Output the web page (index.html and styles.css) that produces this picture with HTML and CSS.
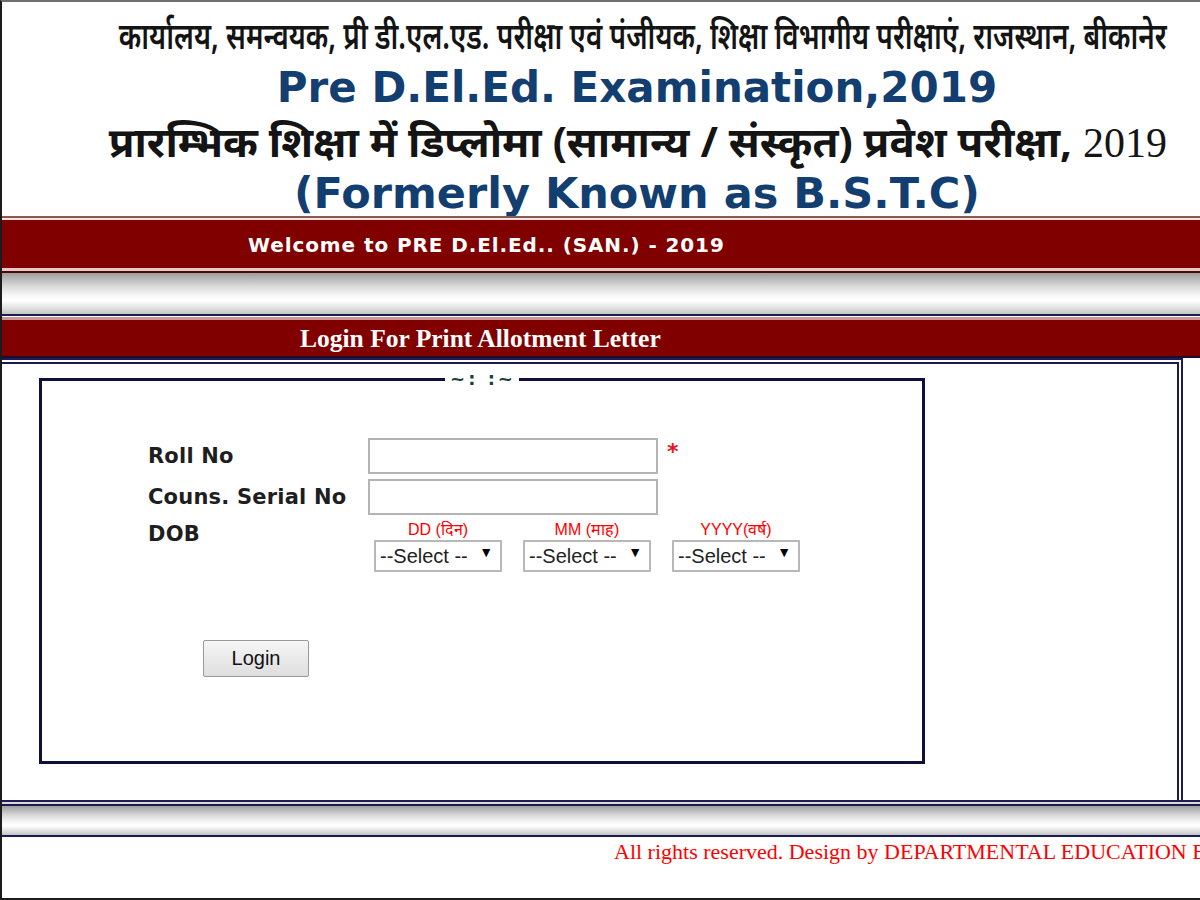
FILE: index.html
```html
<!DOCTYPE html>
<html lang="hi">
<head>
<meta charset="utf-8">
<title>Pre D.El.Ed. Examination, 2019</title>
<link rel="stylesheet" href="styles.css">
</head>
<body>
<div class="page">
  <header class="masthead">
    <div class="mh-line mh-right"><span class="mh-hindi1">कार्यालय, समन्वयक, प्री डी.एल.एड. परीक्षा एवं पंजीयक, शिक्षा विभागीय परीक्षाएं, राजस्थान, बीकानेर</span></div>
    <div class="mh-line mh-en">Pre D.El.Ed. Examination,2019</div>
    <div class="mh-line mh-right"><span class="mh-hindi2">प्रारम्भिक शिक्षा में डिप्लोमा (सामान्य / संस्कृत) प्रवेश परीक्षा, <span class="yr">2019</span></span></div>
    <div class="mh-line mh-en mh-en2">(Formerly Known as B.S.T.C)</div>
  </header>

  <div class="bar-maroon bar-welcome">Welcome to PRE D.El.Ed.. (SAN.) - 2019</div>
  <div class="bar-gray"></div>
  <div class="bar-maroon bar-title">Login For Print Allotment Letter</div>

  <main class="content">
    <fieldset class="login-box">
      <legend>~: :~</legend>
      <form class="form">
        <label class="lbl" for="roll">Roll No</label>
        <div class="field"><input id="roll" class="txt" type="text"><span class="req">*</span></div>

        <label class="lbl" for="serial">Couns. Serial No</label>
        <div class="field"><input id="serial" class="txt" type="text"></div>

        <div class="lbl lbl-dob">DOB</div>
        <div class="dob">
          <div class="dob-col">
            <div class="dob-cap">DD (दिन)</div>
            <span class="sel"><select><option>--Select --</option></select></span>
          </div>
          <div class="dob-col">
            <div class="dob-cap">MM (माह)</div>
            <span class="sel"><select><option>--Select --</option></select></span>
          </div>
          <div class="dob-col">
            <div class="dob-cap">YYYY(वर्ष)</div>
            <span class="sel"><select><option>--Select --</option></select></span>
          </div>
        </div>

        <div class="actions"><button type="button" class="btn">Login</button></div>
      </form>
    </fieldset>
  </main>

  <div class="bar-gray bar-gray-bottom"></div>
  <footer class="footer">All rights reserved. Design by DEPARTMENTAL EDUCATION BOARD, RAJASTHAN, BIKANER</footer>
</div>
</body>
</html>
```

FILE: styles.css
```css
* { box-sizing: border-box; }

html, body {
  margin: 0;
  padding: 0;
  background: #fff;
}

.page {
  width: 1200px;
  height: 900px;
  border-left: 2px solid #1b1b1b;
  border-top: 2px solid #6f6f6f;
  border-bottom: 2px solid #1b1b1b;
  overflow: hidden;
  background: #fff;
  display: flex;
  flex-direction: column;
}

/* ---------- masthead ---------- */
.masthead {
  height: 214px;
  padding-top: 6px;
  flex: none;
  text-align: center;
}

.mh-line {
  height: 53px;
  line-height: 53px;
  white-space: nowrap;
}

.mh-right {
  display: flex;
  justify-content: flex-end;
  padding-right: 33px;
}

.mh-hindi1 {
  flex: none;
  display: block;
  font-family: "Noto Sans", sans-serif;
  font-weight: 600;
  font-size: 37px;
  color: #141414;
  transform: scaleX(0.753);
  transform-origin: right center;
}

.mh-hindi2 {
  flex: none;
  display: block;
  font-family: "Noto Sans", sans-serif;
  font-weight: bold;
  font-size: 42px;
  color: #141414;
}

.mh-hindi2 .yr {
  font-family: "Liberation Serif", serif;
  font-weight: normal;
}

.mh-en {
  padding-left: 72px;
  font-family: "DejaVu Sans", sans-serif;
  font-weight: bold;
  font-size: 42px;
  color: #133e70;
}

.mh-en2 {
  font-size: 43px;
}

/* ---------- bars ---------- */
.bar-maroon {
  flex: none;
  color: #fff;
  white-space: nowrap;
  background: #800000;
}

.bar-welcome {
  height: 57px;
  border-top: 2px solid #8a5a52;
  border-bottom: 2px solid #4a0a0a;
  box-shadow: inset 0 2px 0 #f4e4e4, inset 0 -3px 0 #e8c8c8;
  padding-left: 246px;
  padding-top: 15px;
  font-family: "DejaVu Sans", sans-serif;
  font-weight: bold;
  font-size: 20px;
  letter-spacing: 0.9px;
  line-height: 24px;
}

.bar-gray {
  flex: none;
  height: 43px;
  border-bottom: 2px solid #1c1c55;
  background: linear-gradient(#9d9d9d, #d6d6d6 30%, #f7f7f7 55%, #ffffff 68%, #dcdcdc 88%, #c4c4c4);
}

.bar-title {
  height: 42px;
  border-top: 1px solid #fff;
  box-shadow: inset 0 3px 0 #c89696, inset 0 -2px 0 #1d0d2a;
  padding-left: 298px;
  padding-top: 7px;
  font-family: "Liberation Serif", serif;
  font-weight: bold;
  font-size: 25.5px;
  line-height: 30px;
}

/* ---------- content ---------- */
.content {
  flex: none;
  width: 1181px;
  height: 442px;
  border-top: 6px double #1c1c55;
  border-right: 6px double #1c1c55;
  padding-top: 6px;
}

.login-box {
  margin: 0 0 0 37px;
  width: 886px;
  height: 394px;
  border: 3px solid #0f0f3c;
  padding: 0;
}

.login-box legend {
  margin: 0 auto;
  padding: 0 3px 0 5px;
  font-family: "DejaVu Sans", sans-serif;
  font-weight: bold;
  font-size: 18px;
  color: #17403a;
  line-height: 18px;
  letter-spacing: 3px;
}

.form {
  display: grid;
  grid-template-columns: 220px auto;
  row-gap: 5px;
  margin-top: 50px;
  padding-left: 106px;
}

.lbl {
  font-family: "DejaVu Sans", sans-serif;
  font-weight: bold;
  font-size: 21px;
  color: #1e1e1e;
  display: flex;
  align-items: center;
  letter-spacing: 0.2px;
}

.field {
  display: flex;
  align-items: flex-start;
}

.txt {
  width: 290px;
  height: 36px;
  border: 2px solid #b4b4b4;
  background: #fff;
  margin: 0;
}

.req {
  color: #e8161b;
  font-family: "DejaVu Sans", sans-serif;
  font-size: 22px;
  font-weight: bold;
  margin-left: 9px;
  line-height: 28px;
}

.lbl-dob {
  align-items: flex-start;
  padding-top: 2px;
  height: 30px;
}

.dob {
  display: flex;
  gap: 21px;
  padding-left: 6px;
}

.dob-col {
  width: 128px;
  display: flex;
  flex-direction: column;
  align-items: center;
}

.dob-cap {
  color: #f00;
  font-family: "Liberation Sans", sans-serif;
  font-size: 16px;
  line-height: 20px;
  height: 20px;
  white-space: nowrap;
}

.sel {
  position: relative;
  display: block;
  width: 128px;
  height: 32px;
}

.sel select {
  appearance: none;
  -webkit-appearance: none;
  width: 128px;
  height: 32px;
  margin: 0;
  border: 2px solid #b8b8b8;
  border-radius: 1px;
  background: #fff;
  padding: 0 0 0 4px;
  font-family: "Liberation Sans Narrow", "Liberation Sans", sans-serif;
  font-size: 20px;
  color: #222;
}

.sel::after {
  content: "▼";
  position: absolute;
  right: 9px;
  top: 5px;
  font-size: 14px;
  color: #000;
  pointer-events: none;
}

.actions {
  grid-column: 1 / 3;
  padding-left: 55px;
  margin-top: 63px;
}

.btn {
  width: 106px;
  height: 37px;
  border: 1px solid #9a9a9a;
  border-radius: 2px;
  background: linear-gradient(#f6f6f6, #dedede);
  font-family: "Liberation Sans", sans-serif;
  font-size: 20px;
  color: #111;
  padding: 0;
}

/* ---------- footer ---------- */
.bar-gray-bottom {
  height: 37px;
  border-top: 6px double #1c1c55;
  border-bottom: 2px solid #1c1c55;
}

.footer {
  flex: none;
  padding-left: 612px;
  padding-top: 2px;
  font-family: "Liberation Serif", serif;
  font-size: 22px;
  color: #f00;
  white-space: nowrap;
  overflow: hidden;
}
```
